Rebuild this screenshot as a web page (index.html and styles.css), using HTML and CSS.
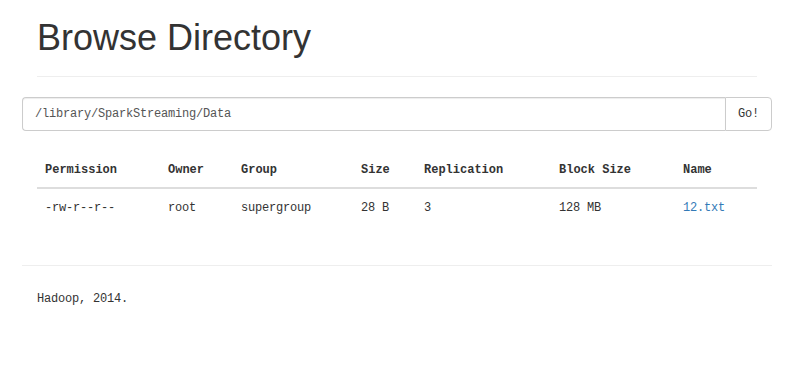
FILE: index.html
```html
<!DOCTYPE html>
<html>
<head>
<meta charset="utf-8">
<title>Browsing HDFS</title>
<link rel="stylesheet" href="styles.css">
</head>
<body>
<div class="container">
  <div class="inner">
    <div class="page-header">
      <h1>Browse Directory</h1>
    </div>
  </div>
  <form class="input-group">
    <input class="path" type="text" value="/library/SparkStreaming/Data">
    <button class="go" type="button">Go!</button>
  </form>
  <div class="inner listing-wrap">
    <table class="listing">
      <thead>
        <tr>
          <th class="c-perm">Permission</th>
          <th class="c-owner">Owner</th>
          <th class="c-group">Group</th>
          <th class="c-size">Size</th>
          <th class="c-rep">Replication</th>
          <th class="c-block">Block Size</th>
          <th class="c-name">Name</th>
        </tr>
      </thead>
      <tbody>
        <tr>
          <td>-rw-r--r--</td>
          <td>root</td>
          <td>supergroup</td>
          <td>28 B</td>
          <td>3</td>
          <td>128 MB</td>
          <td><a href="#">12.txt</a></td>
        </tr>
      </tbody>
    </table>
  </div>
  <hr class="rule">
  <div class="inner footer">
    <p>Hadoop, 2014.</p>
  </div>
</div>
</body>
</html>
```
FILE: styles.css
```css
html, body {
  margin: 0;
  padding: 0;
  background: #fff;
}
body {
  font-family: "Liberation Mono", "DejaVu Sans Mono", monospace;
  font-size: 12px;
  letter-spacing: -0.2px;
  line-height: 20px;
  color: #333;
}
.container {
  width: 750px;
  margin-left: 22px;
}
.inner {
  padding: 0 15px;
}
.page-header {
  padding-top: 18px;
  padding-bottom: 8px;
  margin-bottom: 20px;
  border-bottom: 1px solid #eee;
}
.page-header h1 {
  margin: 0 0 10px 0;
  font-family: "Liberation Sans", Arial, sans-serif;
  font-weight: 500;
  font-size: 36px;
  line-height: 40px;
  letter-spacing: 0;
  color: #333;
}
.input-group {
  display: flex;
  margin: 0 0 21px 0;
}
.path {
  flex: 1;
  min-width: 0;
  height: 34px;
  box-sizing: border-box;
  padding: 6px 12px;
  border: 1px solid #ccc;
  border-right: 0;
  border-radius: 4px 0 0 4px;
  font-family: "Liberation Mono", monospace;
  font-size: 12px;
  letter-spacing: -0.2px;
  color: #555;
  box-shadow: inset 0 1px 1px rgba(0,0,0,.075);
  outline: none;
}
.go {
  width: 47px;
  height: 34px;
  box-sizing: border-box;
  padding: 6px 0;
  border: 1px solid #ccc;
  border-radius: 0 4px 4px 0;
  background: #fff;
  font-family: "Liberation Mono", monospace;
  font-size: 12px;
  letter-spacing: -0.2px;
  color: #333;
}
.listing-wrap {
  padding-bottom: 19px;
}
.listing {
  width: 100%;
  border-collapse: collapse;
  table-layout: fixed;
  margin-bottom: 20px;
}
.listing th, .listing td {
  padding: 8px;
  text-align: left;
  line-height: 20px;
  white-space: nowrap;
}
.listing th {
  padding-bottom: 7px;
  font-weight: bold;
  letter-spacing: 0;
  vertical-align: bottom;
  border-bottom: 2px solid #ddd;
}
.listing td {
  padding-top: 9px;
  border-top: 1px solid #ddd;
  vertical-align: top;
}
.listing tbody tr:first-child td {
  border-top: 0;
}
.c-perm { width: 107px; }
.c-owner { width: 57px; }
.c-group { width: 104px; }
.c-size { width: 47px; }
.c-rep { width: 119px; }
.c-block { width: 108px; }
.c-name { width: auto; }
.listing a {
  color: #337ab7;
  text-decoration: none;
}
.rule {
  margin: 0 0 20px 0;
  border: 0;
  border-top: 1px solid #eee;
  height: 0;
}
.footer p {
  margin: 0 0 10px 0;
  padding-top: 3px;
}
```
